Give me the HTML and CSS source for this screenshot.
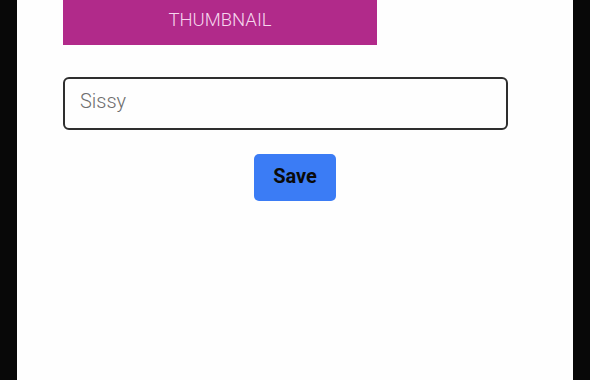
FILE: index.html
```html
<!DOCTYPE html>
<html lang="en">
<head>
<meta charset="utf-8">
<title>Edit</title>
<link rel="stylesheet" href="styles.css">
</head>
<body>
<main class="panel">
  <div class="thumbnail">THUMBNAIL</div>
  <input class="name-field" type="text" value="Sissy" aria-label="Name">
  <div class="actions">
    <button class="save-btn" type="button">Save</button>
  </div>
</main>
</body>
</html>
```
FILE: styles.css
```css
html, body {
  margin: 0;
  padding: 0;
  height: 100%;
}
body {
  background: #080808;
  font-family: Roboto, "Noto Sans", sans-serif;
  overflow: hidden;
}
.panel {
  margin: 0 17px;
  height: 380px;
  background: #fefefe;
  padding: 0 46px;
  box-sizing: border-box;
  display: flex;
  flex-direction: column;
  align-items: flex-start;
}
.thumbnail {
  width: 314px;
  height: 45px;
  box-sizing: border-box;
  padding-bottom: 5px;
  background: #b12a8a;
  color: #f6d6ee;
  font-size: 18.5px;
  font-weight: 300;
  display: flex;
  align-items: center;
  justify-content: center;
}
.name-field {
  margin-top: 32px;
  width: 445px;
  height: 53px;
  box-sizing: border-box;
  border: 2px solid #2e2e2e;
  border-radius: 6px;
  padding: 0 15px 5px;
  font-family: Roboto, "Noto Sans", sans-serif;
  font-size: 20px;
  font-weight: 300;
  color: #6e6e6e;
  background: #fefefe;
  outline: none;
}
.actions {
  align-self: stretch;
  display: flex;
  justify-content: center;
  margin-top: 24px;
}
.save-btn {
  width: 82px;
  height: 47px;
  border: none;
  border-radius: 5px;
  background: #3b7cf5;
  color: #0a0a0a;
  font-family: Roboto, "Noto Sans", sans-serif;
  font-size: 20px;
  font-weight: 700;
  padding: 0 0 3px;
}
```
